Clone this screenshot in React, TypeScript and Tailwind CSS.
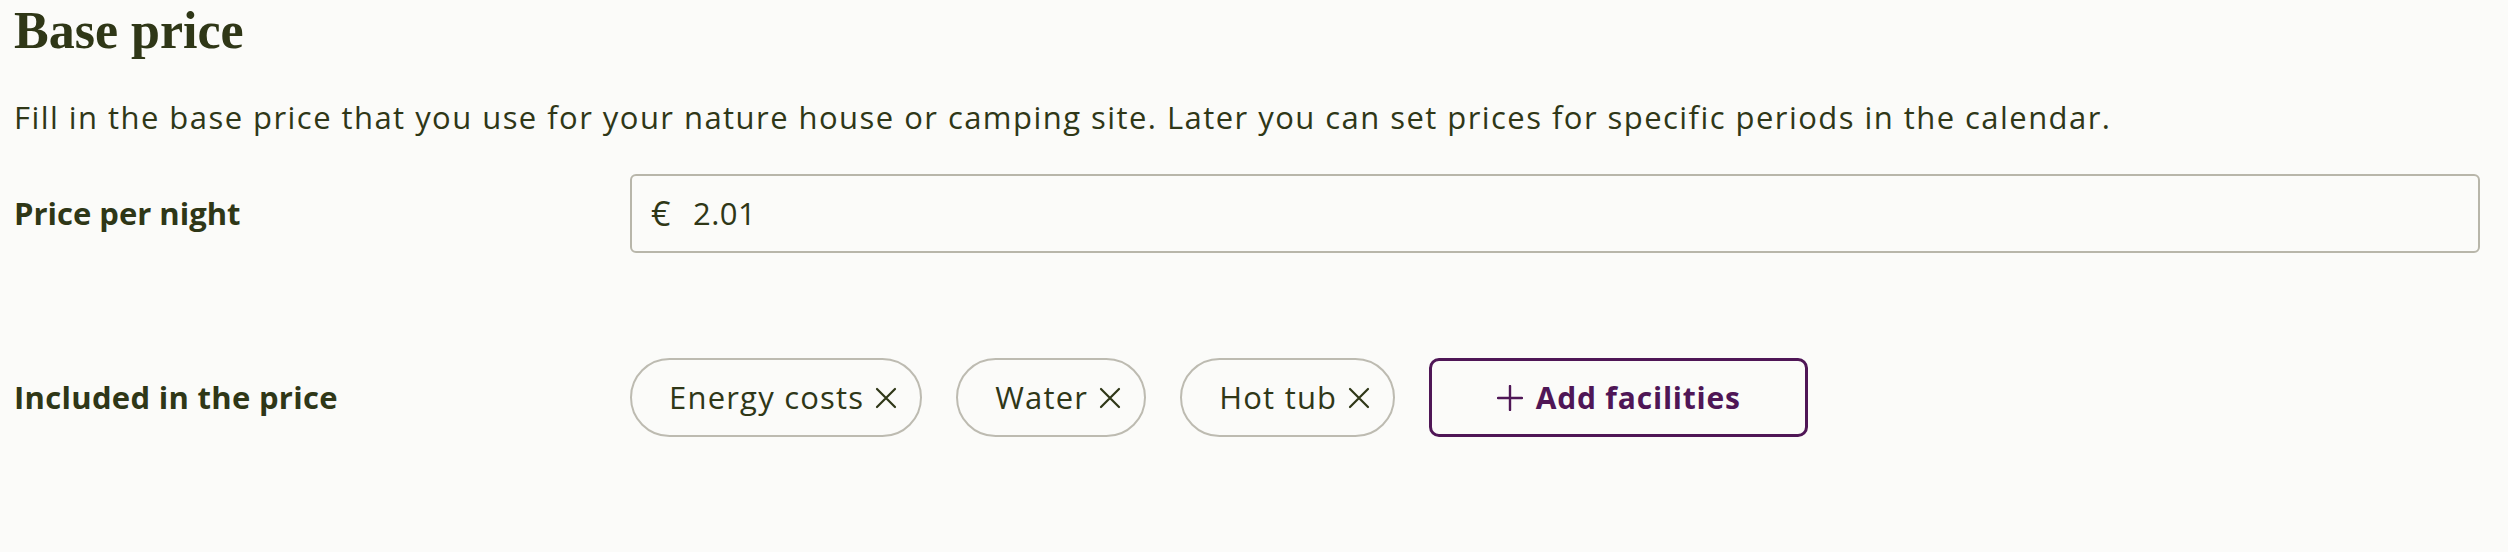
const chips = ['Energy costs', 'Water', 'Hot tub']

function CrossIcon() {
  return (
    <svg width="22" height="22" viewBox="0 0 22 22" fill="none" stroke="currentColor" strokeWidth="2.2" strokeLinecap="round">
      <path d="M2 2 20 20M20 2 2 20" />
    </svg>
  )
}

function PlusIcon() {
  return (
    <svg width="26" height="26" viewBox="0 0 26 26" fill="none" stroke="currentColor" strokeWidth="2.4" strokeLinecap="round">
      <path d="M13 1v24M1 13h24" />
    </svg>
  )
}

export default function App() {
  return (
    <div className="min-h-[552px] w-full bg-[#fbfbf9] pl-[14px] pr-[28px] text-[#2f3717] [font-family:'Open_Sans',Arial,sans-serif]">
      {/* Heading */}
      <h1 className="text-[52px] leading-[62px] font-semibold [font-family:'Liberation_Serif','Times_New_Roman',serif]">
        Base price
      </h1>
      <p className="mt-[33px] text-[31px] leading-[45px] tracking-[1.45px]">
        Fill in the base price that you use for your nature house or camping site. Later you can set prices for specific periods in the calendar.
      </p>

      <div className="mt-[34px] grid grid-cols-[616px_1fr] items-center gap-y-[105px]">
        <label className="text-[31px] font-bold">Price per night</label>
        <div className="flex h-[79px] items-center gap-[22px] rounded-[6px] border-2 border-[#b8b6aa] px-[19px] text-[31px] tracking-[0.5px]">
          <span className="text-[34px]">€</span>
          <span>2.01</span>
        </div>

        <label className="text-[31px] font-bold tracking-[0.3px]">Included in the price</label>
        <div className="flex items-center gap-[34px]">
          {chips.map((chip) => (
            <button
              key={chip}
              className="flex h-[79px] items-center gap-[11px] rounded-full border-2 border-[#bdbbb1] pl-[37px] pr-[23px] text-[31px] tracking-[1.2px]"
            >
              {chip}
              <CrossIcon />
            </button>
          ))}
          <button className="flex h-[79px] w-[379px] items-center justify-center gap-[13px] rounded-[10px] border-[3px] border-[#4f1656] text-[30px] font-bold tracking-[0.8px] text-[#4f1656]">
            <PlusIcon />
            Add facilities
          </button>
        </div>
      </div>
    </div>
  )
}
